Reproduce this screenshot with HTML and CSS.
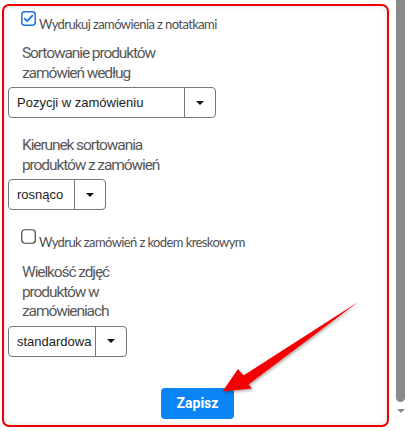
FILE: index.html
```html
<!DOCTYPE html>
<html lang="pl">
<head>
<meta charset="utf-8">
<title>Ustawienia wydruku</title>
<link rel="stylesheet" href="styles.css">
</head>
<body>
<div class="page">
  <form class="panel">
    <label class="check-row">
      <svg class="box box--on" width="15" height="15" viewBox="0 0 15 15"><rect x="0.75" y="0.75" width="13.5" height="13.5" rx="3" fill="#fff" stroke="#1b74e4" stroke-width="1.5"/><path d="M3.6 7.6 L6.2 10.1 L11.4 4.6" fill="none" stroke="#1b74e4" stroke-width="1.8" stroke-linecap="round" stroke-linejoin="round"/></svg>
      <span class="check-text">Wydrukuj zamówienia z notatkami</span>
    </label>

    <div class="field field--first">
      <div class="field-title">Sortowanie produktów<br>zamówień według</div>
      <div class="select select--wide">
        <span class="select-value">Pozycji w zamówieniu</span>
        <span class="select-btn"><span class="caret"></span></span>
      </div>
    </div>

    <div class="field">
      <div class="field-title">Kierunek sortowania<br>produktów z zamówień</div>
      <div class="select select--small">
        <span class="select-value">rosnąco</span>
        <span class="select-btn"><span class="caret"></span></span>
      </div>
    </div>

    <label class="check-row check-row--second">
      <svg class="box" width="15" height="15" viewBox="0 0 15 15"><rect x="0.75" y="0.75" width="13.5" height="13.5" rx="3" fill="#fff" stroke="#444" stroke-width="1.2"/></svg>
      <span class="check-text">Wydruk zamówień z kodem kreskowym</span>
    </label>

    <div class="field field--third">
      <div class="field-title">Wielkość zdjęć<br>produktów w<br>zamówieniach</div>
      <div class="select select--mid">
        <span class="select-value">standardowa</span>
        <span class="select-btn"><span class="caret"></span></span>
      </div>
    </div>

    <div class="actions">
      <button type="button" class="save">Zapisz</button>
    </div>
  </form>

  <div class="scrollbar">
    <div class="thumb"></div>
    <div class="scroll-arrow"></div>
  </div>
</div>

<svg class="annot-arrow" width="416" height="431" viewBox="0 0 416 431">
  <defs>
    <filter id="sh" x="-20%" y="-20%" width="140%" height="140%">
      <feDropShadow dx="1" dy="1.5" stdDeviation="1.5" flood-color="#000" flood-opacity="0.35"/>
    </filter>
  </defs>
  <polygon points="222.5,391.5 238,369 243.5,375.5 358,302 248.5,384.5 252,388.5" fill="#f50000" filter="url(#sh)"/>
</svg>
</body>
</html>
```

FILE: styles.css
```css
html, body {
  margin: 0;
  padding: 0;
  background: #fff;
}

body {
  width: 416px;
  height: 431px;
  overflow: hidden;
  position: relative;
  font-family: Lato, "Open Sans", sans-serif;
}

.page {
  display: flex;
  align-items: flex-start;
}

.panel {
  box-sizing: border-box;
  margin: 4px 0 0 2px;
  width: 387px;
  height: 423px;
  border: 2px solid #f20000;
  border-radius: 7px;
  box-shadow: inset 0 0 5px rgba(0, 0, 0, 0.14);
  padding: 5px 0 0 4px;
  display: flex;
  flex-direction: column;
  align-items: flex-start;
}

.check-row {
  display: flex;
  align-items: flex-start;
  margin-left: 13px;
  color: #555;
}

.box {
  display: block;
  flex: none;
}

.check-text {
  margin-top: 5px;
  margin-left: 3px;
  font-family: Lato, sans-serif;
  font-size: 13px;
  letter-spacing: -0.6px;
  line-height: 16px;
  color: #4f4f4f;
}

.check-row--second {
  margin-top: 19px;
}

.field {
  display: flex;
  flex-direction: column;
  align-items: flex-start;
  margin-top: 17px;
}

.field--first {
  margin-top: 11px;
}

.field--third {
  margin-top: 12px;
}

.field-title {
  margin-left: 14px;
  margin-bottom: 4px;
  padding-top: 1px;
  font-family: Roboto, "Liberation Sans", sans-serif;
  font-size: 15.5px;
  letter-spacing: -1.1px;
  line-height: 19.5px;
  color: #585858;
}

.select {
  box-sizing: border-box;
  display: flex;
  height: 31px;
  border: 1px solid #777;
  border-radius: 4px;
  font-family: "Liberation Sans", Arial, sans-serif;
  font-size: 13px;
  color: #222;
}

.select--wide { width: 208px; }
.select--small { width: 98px; }
.select--mid { width: 119px; }

.select-value {
  flex: 1;
  display: flex;
  align-items: center;
  padding-left: 8px;
  border-right: 1px solid #777;
}

.select-btn {
  width: 30px;
  display: flex;
  align-items: center;
  justify-content: center;
}

.caret {
  width: 0;
  height: 0;
  border-left: 4px solid transparent;
  border-right: 4px solid transparent;
  border-top: 4px solid #111;
}

.actions {
  align-self: stretch;
  display: flex;
  justify-content: center;
  margin-top: 31px;
  padding-right: 2px;
}

.save {
  width: 73px;
  height: 31px;
  border: none;
  border-radius: 4px;
  background: #0b84f6;
  color: #fff;
  font-family: Roboto, "Liberation Sans", sans-serif;
  font-weight: 700;
  font-size: 14px;
  padding: 0;
  margin-left: 2px;
}

.scrollbar {
  margin-left: 7px;
  width: 9px;
  display: flex;
  flex-direction: column;
  align-items: center;
}

.thumb {
  width: 9px;
  height: 402px;
  background: #8a8a8a;
  border-radius: 0 0 5px 5px;
}

.scroll-arrow {
  margin-top: 7px;
  width: 0;
  height: 0;
  border-left: 4px solid transparent;
  border-right: 4px solid transparent;
  border-top: 4px solid #8a8a8a;
}

.annot-arrow {
  position: absolute;
  left: 0;
  top: 0;
  pointer-events: none;
}
```
